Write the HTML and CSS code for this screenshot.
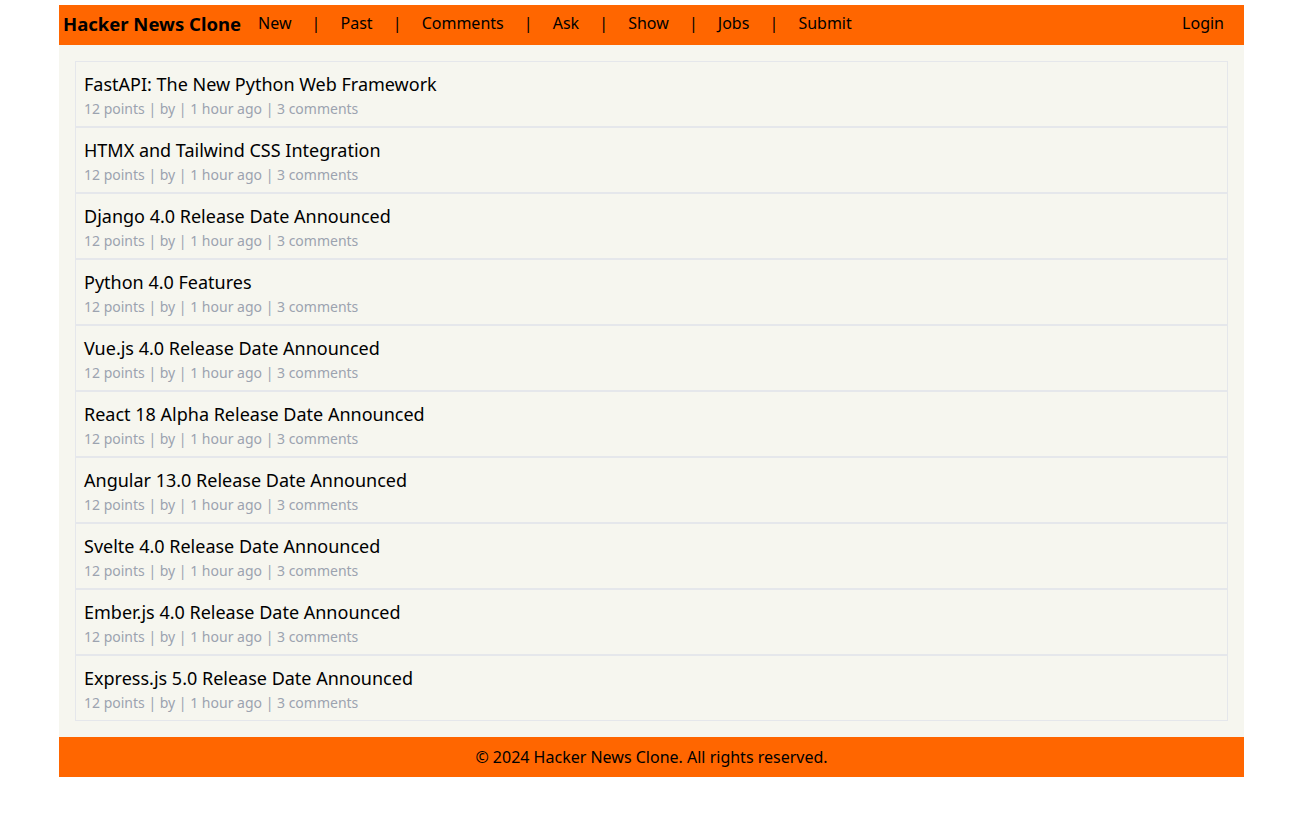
FILE: index.html
```html
<!DOCTYPE html>
<html lang="en">
<head>
<meta charset="utf-8">
<title>Hacker News Clone</title>
<link rel="stylesheet" href="styles.css">
</head>
<body>
<div class="page">
  <header class="topbar">
    <a class="brand" href="#">Hacker News Clone</a>
    <nav class="nav">
      <a href="#">New</a><span class="sep">|</span>
      <a href="#">Past</a><span class="sep">|</span>
      <a href="#">Comments</a><span class="sep">|</span>
      <a href="#">Ask</a><span class="sep">|</span>
      <a href="#">Show</a><span class="sep">|</span>
      <a href="#">Jobs</a><span class="sep">|</span>
      <a href="#">Submit</a>
    </nav>
    <a class="login" href="#">Login</a>
  </header>
  <main class="content">
    <ul class="stories">
      <li class="story"><a class="title" href="#">FastAPI: The New Python Web Framework</a><div class="meta">12 points | by | 1 hour ago | 3 comments</div></li>
      <li class="story"><a class="title" href="#">HTMX and Tailwind CSS Integration</a><div class="meta">12 points | by | 1 hour ago | 3 comments</div></li>
      <li class="story"><a class="title" href="#">Django 4.0 Release Date Announced</a><div class="meta">12 points | by | 1 hour ago | 3 comments</div></li>
      <li class="story"><a class="title" href="#">Python 4.0 Features</a><div class="meta">12 points | by | 1 hour ago | 3 comments</div></li>
      <li class="story"><a class="title" href="#">Vue.js 4.0 Release Date Announced</a><div class="meta">12 points | by | 1 hour ago | 3 comments</div></li>
      <li class="story"><a class="title" href="#">React 18 Alpha Release Date Announced</a><div class="meta">12 points | by | 1 hour ago | 3 comments</div></li>
      <li class="story"><a class="title" href="#">Angular 13.0 Release Date Announced</a><div class="meta">12 points | by | 1 hour ago | 3 comments</div></li>
      <li class="story"><a class="title" href="#">Svelte 4.0 Release Date Announced</a><div class="meta">12 points | by | 1 hour ago | 3 comments</div></li>
      <li class="story"><a class="title" href="#">Ember.js 4.0 Release Date Announced</a><div class="meta">12 points | by | 1 hour ago | 3 comments</div></li>
      <li class="story"><a class="title" href="#">Express.js 5.0 Release Date Announced</a><div class="meta">12 points | by | 1 hour ago | 3 comments</div></li>
    </ul>
  </main>
  <footer class="footer">© 2024 Hacker News Clone. All rights reserved.</footer>
</div>
</body>
</html>
```

FILE: styles.css
```css
* { box-sizing: border-box; }
html, body { margin: 0; padding: 0; background: #ffffff; }
body {
  font-family: "Noto Sans", "Open Sans", sans-serif;
  color: #000;
}
a { color: inherit; text-decoration: none; }

.page {
  width: 1185px;
  margin: 5px 0 0 59px;
}

.topbar {
  display: flex;
  align-items: center;
  height: 40px;
  background: #ff6600;
  padding: 0 20px 4px 4px;
}
.brand {
  font-weight: 700;
  font-size: 18.5px;
  color: #000;
  margin-right: 17px;
}
.nav {
  display: flex;
  align-items: center;
  font-size: 16px;
  color: #000;
  flex: 1;
}
.sep {
  margin: 0 20.1px;
}
.login { font-size: 16px; }

.content {
  background: #f6f6ef;
  padding: 16px;
}
.stories {
  list-style: none;
  margin: 0;
  padding: 0;
}
.story {
  border: 1px solid #e5e7eb;
  padding: 8px 8px 6px;
}
.title {
  display: block;
  font-size: 18px;
  line-height: 28px;
  color: #000;
}
.meta {
  font-size: 14px;
  line-height: 22px;
  color: #9ca3af;
}

.footer {
  background: #ff6600;
  height: 40px;
  display: flex;
  align-items: center;
  justify-content: center;
  font-size: 16px;
  color: #000;
}
```
